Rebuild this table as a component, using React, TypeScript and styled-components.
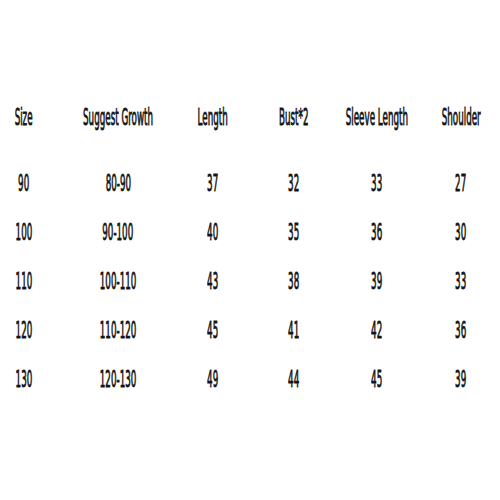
import styled, { createGlobalStyle } from "styled-components";

const GlobalStyle = createGlobalStyle`
  html, body {
    margin: 0;
    padding: 0;
    background: #ffffff;
  }
  body {
    width: 500px;
    height: 500px;
    overflow: hidden;
  }
`;

const headers = [
  "Size",
  "Suggest Growth",
  "Length",
  "Bust*2",
  "Sleeve Length",
  "Shoulder",
];

const rows = [
  ["90", "80-90", "37", "32", "33", "27"],
  ["100", "90-100", "40", "35", "36", "30"],
  ["110", "100-110", "43", "38", "39", "33"],
  ["120", "110-120", "45", "41", "42", "36"],
  ["130", "120-130", "49", "44", "45", "39"],
];

const App: React.FC = () => {
  return (
    <>
      <GlobalStyle />
      <Chart>
        <HeaderRow>
          {headers.map((h) => (
            <Cell key={h}>
              <Label>{h}</Label>
            </Cell>
          ))}
        </HeaderRow>
        {rows.map((row) => (
          <Row key={row[0]}>
            {row.map((value, i) => (
              <Cell key={i}>
                <Label>{value}</Label>
              </Cell>
            ))}
          </Row>
        ))}
      </Chart>
    </>
  );
};

const Chart = styled.div`
  width: 500px;
  height: 500px;
  overflow: hidden;
  padding-top: 93px;
  box-sizing: border-box;
  font-family: "DejaVu Sans", Verdana, sans-serif;
  color: #141414;
`;

const Row = styled.div`
  display: grid;
  grid-template-columns: 48px 140px 50px 112px 54px 114px;
  height: 49px;
  align-items: center;
`;

const HeaderRow = styled(Row)`
  margin-bottom: 17px;
`;

const Cell = styled.div`
  display: flex;
  justify-content: center;
  align-items: center;
  height: 49px;
  white-space: nowrap;
  overflow: visible;
`;

const Label = styled.span`
  display: inline-block;
  font-size: 23px;
  line-height: 49px;
  -webkit-text-stroke: 0.9px #141414;
  transform: scaleX(0.38);
  transform-origin: center;
`;

export default App;
